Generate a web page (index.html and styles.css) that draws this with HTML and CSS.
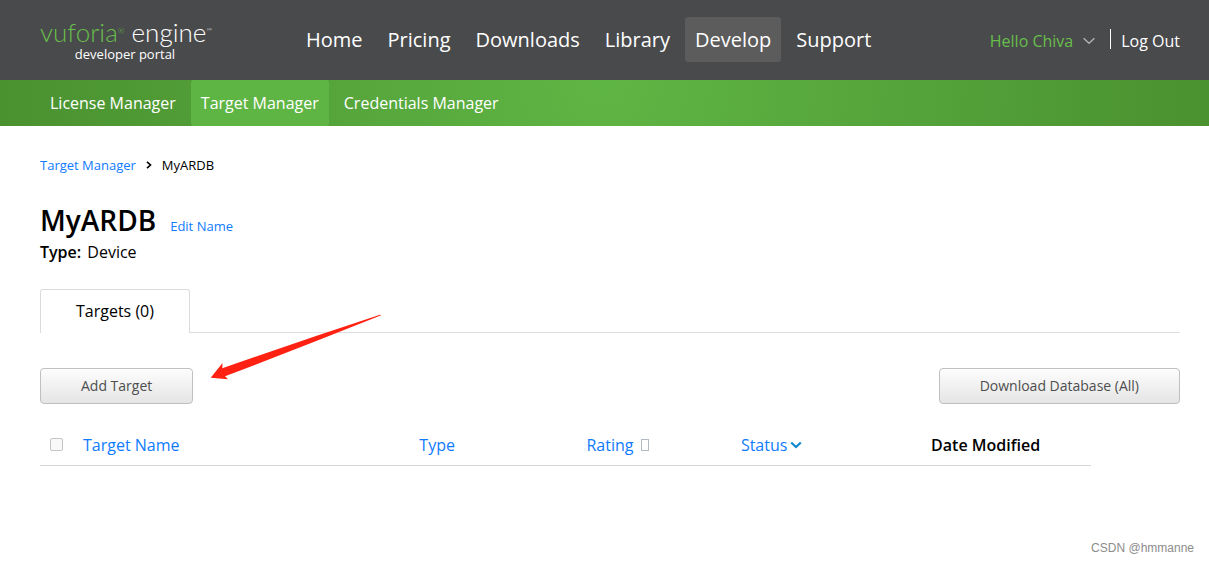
FILE: index.html
```html
<!DOCTYPE html>
<html lang="en">
<head>
<meta charset="utf-8">
<title>Target Manager - MyARDB</title>
<link rel="stylesheet" href="styles.css">
</head>
<body>
<header class="header">
  <a class="logo" href="#">
    <span class="logo-name"><span class="logo-green">vuforia<sup class="logo-mark">®</sup></span> engine<sup class="logo-mark">™</sup></span>
    <span class="logo-sub">developer portal</span>
  </a>
  <nav class="nav">
    <a class="nav-link" href="#">Home</a>
    <a class="nav-link" href="#">Pricing</a>
    <a class="nav-link" href="#">Downloads</a>
    <a class="nav-link" href="#">Library</a>
    <a class="nav-link active" href="#">Develop</a>
    <a class="nav-link" href="#">Support</a>
  </nav>
  <div class="account">
    <button class="user" type="button">Hello Chiva
      <svg width="12" height="8" viewBox="0 0 12 8" fill="none" stroke="#adafb1" stroke-width="1.5" aria-hidden="true"><path d="M.6 1.2 6 6.2l5.400-5"/></svg>
    </button>
    <span class="divider"></span>
    <a class="logout" href="#">Log Out</a>
  </div>
</header>
<nav class="subnav">
  <a class="subnav-link" href="#">License Manager</a>
  <a class="subnav-link active" href="#">Target Manager</a>
  <a class="subnav-link" href="#">Credentials Manager</a>
</nav>
<main class="main">
  <nav class="crumbs">
    <a class="link" href="#">Target Manager</a>
    <svg width="6" height="8" viewBox="0 0 6 8" fill="none" stroke="#000" stroke-width="1.6" aria-hidden="true"><path d="M1 .8 4.500 4 1 7.200"/></svg>
    <span>MyARDB</span>
  </nav>
  <div class="title-row">
    <h1 class="title">MyARDB</h1>
    <a class="link edit" href="#">Edit Name</a>
  </div>
  <p class="type"><span class="type-label">Type:</span> Device</p>
  <div class="tabs">
    <button class="tab" type="button">Targets (0)</button>
  </div>
  <div class="toolbar">
    <button class="btn btn-add" type="button">Add Target</button>
    <button class="btn btn-download" type="button">Download Database (All)</button>
    <svg class="pointer" width="172" height="68" viewBox="0 0 172 68" aria-hidden="true"><path fill="#ff2213" d="M.7 63.700 12.500 49 12.300 54.300 Q90 27 170 .8 Q171.500 .5 170.600 1.500 Q92 33 15 62.300L18 65.300Z"/></svg>
  </div>
  <table class="targets">
    <thead>
      <tr>
        <th class="col-check"><input class="check" type="checkbox" aria-label="Select all targets"></th>
        <th class="col-name"><a class="link" href="#">Target Name</a></th>
        <th class="col-type"><a class="link" href="#">Type</a></th>
        <th class="col-rating"><a class="link sort" href="#">Rating <span class="sort-box"></span></a></th>
        <th class="col-status"><a class="link sort" href="#">Status <svg width="12" height="8" viewBox="0 0 12 8" fill="none" stroke="#1189cf" stroke-width="2.200" aria-hidden="true"><path d="M1.200 1.500 6 6l4.800-4.500"/></svg></a></th>
        <th class="col-date">Date Modified</th>
      </tr>
    </thead>
  </table>
</main>
<footer class="credit">CSDN @hmmanne</footer>
</body>
</html>
```
FILE: styles.css
```css
* { box-sizing: border-box; }
body {
  margin: 0;
  min-height: 100vh;
  display: flex;
  flex-direction: column;
  background: #fff;
  color: #000;
  font: 16px/24px "Open Sans", sans-serif;
}
a { text-decoration: none; }
button { font: inherit; cursor: pointer; }

.header {
  display: flex;
  align-items: center;
  height: 80px;
  padding: 0 29px 0 40px;
  background: #494a4c;
}
.logo {
  width: 256px;
  padding-top: 2px;
  color: #fff;
}
.logo-name {
  display: block;
  font: 300 26px/24px Lato, sans-serif;
  white-space: nowrap;
}
.logo-green { color: #68be4a; }
.logo-mark { font-size: 8px; line-height: 8px; vertical-align: 8px; }
.logo-sub {
  display: block;
  width: 170px;
  margin-top: 2px;
  text-align: center;
  font-size: 13px;
  line-height: 16px;
}
.nav { display: flex; gap: 5px; padding-bottom: 2px; }
.nav-link {
  padding: 0 10px;
  border-radius: 3px;
  color: #fff;
  font-size: 20px;
  line-height: 45px;
}
.nav-link.active { background: #5c5c5c; }
.account {
  display: flex;
  align-items: center;
  margin-left: auto;
  padding-top: 2px;
}
.user {
  display: flex;
  align-items: center;
  gap: 10px;
  padding: 0;
  border: 0;
  background: none;
  color: #68be4a;
}
.divider {
  width: 1px;
  height: 20px;
  margin: 0 10px 4px 15px;
  background: #fff;
}
.logout { color: #fff; }

.subnav {
  display: flex;
  gap: 5px;
  padding: 0 40px;
  background: radial-gradient(circle at 50% 0, #5fb544, #4a9130);
}
.subnav-link {
  padding: 0 10px;
  border-radius: 3px;
  color: #fff;
  line-height: 46px;
}
.subnav-link.active { background: #5fb544; }

.main { padding: 29px 29px 0 40px; }
.link { color: #0f7bff; }
.crumbs {
  display: flex;
  align-items: center;
  gap: 10px;
  font-size: 13px;
  line-height: 20px;
}
.title-row {
  display: flex;
  align-items: baseline;
  gap: 14px;
  margin-top: 25px;
}
.title {
  margin: 0;
  font-size: 28px;
  font-weight: 600;
  line-height: 40px;
}
.edit { font-size: 13px; }
.type { margin: 0; line-height: 24px; }
.type-label { font-weight: 600; margin-right: 2px; }
.tabs {
  display: flex;
  margin-top: 25px;
  border-bottom: 1px solid #dddfe3;
}
.tab {
  width: 150px;
  height: 44px;
  padding: 0 0 2px;
  border: 1px solid #d9dbdf;
  border-bottom: 0;
  border-radius: 3px 3px 0 0;
  margin-bottom: -1px;
  background: #fff;
  color: #000;
}
.toolbar {
  position: relative;
  display: flex;
  justify-content: space-between;
  margin-top: 35px;
}
.btn {
  height: 36px;
  padding: 0 40px;
  border: 1px solid #c0c0c0;
  border-radius: 4px;
  background: linear-gradient(#fdfdfd, #e5e5e5);
  color: #4e4e4e;
  font-size: 14px;
}
.pointer {
  position: absolute;
  left: 170px;
  top: -54px;
}
.targets {
  width: calc(100% - 89px);
  margin-top: 20px;
  border-collapse: collapse;
  table-layout: fixed;
}
.targets th {
  height: 41px;
  padding: 1px 0 0;
  border-bottom: 1px solid #d7d7d7;
  text-align: left;
  font-weight: 400;
  white-space: nowrap;
}
.targets .col-check { width: 43px; padding: 0 0 0 10px; }
.col-name { width: 32%; }
.col-type { width: 15.9%; }
.col-rating { width: 14.7%; }
.col-status { width: 18.1%; }
.targets .col-date { font-weight: 600; }
.check {
  appearance: none;
  display: block;
  width: 13px;
  height: 13px;
  margin: 0;
  border: 1px solid #c5c5c5;
  border-radius: 2px;
  background: #f8f8f8;
}
.sort { display: inline-flex; align-items: center; gap: 3px; }
.sort-box {
  width: 8px;
  height: 12px;
  margin-left: 5px;
  border: 1px solid #b3bac1;
}
.credit {
  margin-top: auto;
  padding: 0 15px 6px 0;
  text-align: right;
  color: #8c8c8c;
  font: 12px/16px "Liberation Sans", Arial, sans-serif;
}
```
